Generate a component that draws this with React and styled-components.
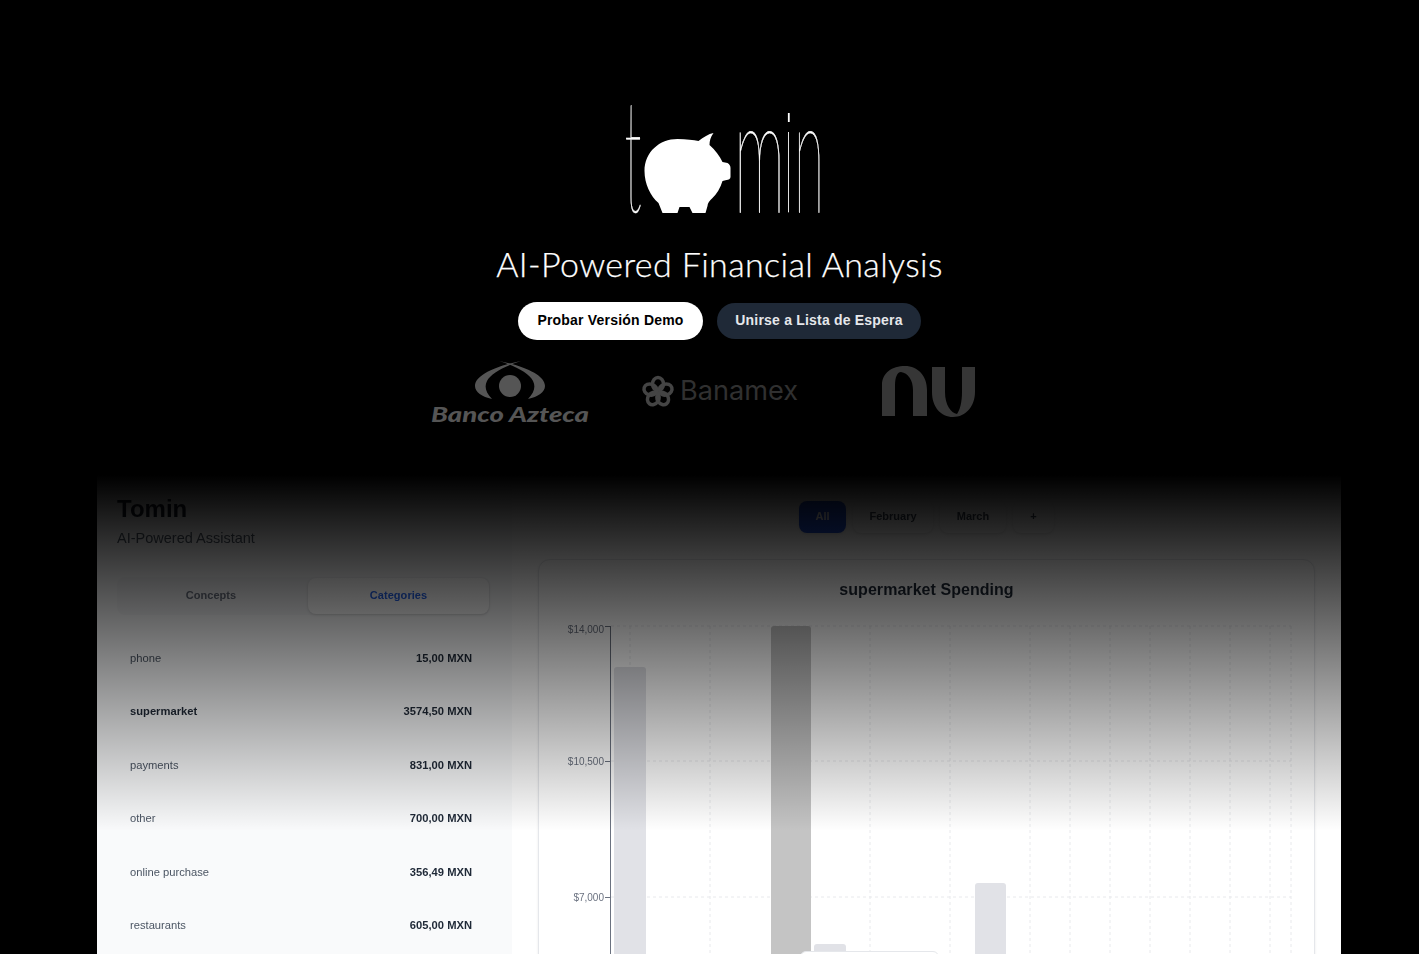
import React from 'react';
import styled, { createGlobalStyle } from 'styled-components';

const Global = createGlobalStyle`
  html, body { margin: 0; padding: 0; background: #000; height: 100%; overflow: hidden; }
  * { box-sizing: border-box; }
`;

const Page = styled.div`
  width: 1439px;
  height: 954px;
  overflow: hidden;
  background: #000;
  display: flex;
  flex-direction: column;
  align-items: center;
  padding-top: 100px;
  font-family: "Liberation Sans", Arial, sans-serif;
  & > * { flex: none; }
`;
const LogoArt = styled.svg`
  display: block;
  width: 210px;
  height: 118px;
`;
const LogoLetter = styled.text`
  font-family: "Lato", sans-serif;
  font-weight: 100;
  fill: #fff;
  stroke: #fff;
  stroke-width: 0.7px;
`;
const Tagline = styled.h1`
  margin: 26px 0 0;
  font-family: "Lato", sans-serif;
  font-weight: 300;
  font-size: 34px;
  line-height: 40px;
  letter-spacing: 0.38px;
  -webkit-text-stroke: 0.25px #fff;
  color: #fff;
`;
const Actions = styled.div`
  display: flex;
  align-items: center;
  gap: 14px;
  margin-top: 18px;
`;
const Action = styled.button`
  border: 0;
  padding: 0 0 2px;
  font-family: inherit;
  font-weight: 700;
  font-size: 14px;
  letter-spacing: 0.2px;
  border-radius: 20px;
  width: ${p => (p.$primary ? 185 : 204)}px;
  height: ${p => (p.$primary ? 38 : 36)}px;
  background: ${p => (p.$primary ? '#fff' : '#1f2937')};
  color: ${p => (p.$primary ? '#000' : '#e5e7eb')};
`;
const Brands = styled.div`
  display: flex;
  align-items: center;
  justify-content: center;
  margin-top: 20px;
  height: 68px;
`;
const BrandArt = styled.svg`
  display: block;
  width: 210px;
  height: 68px;
`;
const Preview = styled.section`
  position: relative;
  width: 1244px;
  height: 600px;
  margin: 47px 0 0 -1px;
  background: #fff;
  display: grid;
  grid-template-columns: 415px 1fr;
  overflow: hidden;
  filter: blur(0.35px);
`;
const Fade = styled.div`
  position: absolute;
  left: 0;
  right: 0;
  top: 0;
  height: 356px;
  background: linear-gradient(to bottom, #000 0%, rgba(0,0,0,0.88) 12%, rgba(0,0,0,0) 100%);
  pointer-events: none;
`;
const Sidebar = styled.aside`
  background: #f9fafb;
  padding: 20px 22px 0 20px;
`;
const Title = styled.h2`
  margin: 0;
  font-size: 24px;
  line-height: 28px;
  font-weight: 700;
  color: #111827;
`;
const Subtitle = styled.p`
  margin: 5px 0 0;
  font-size: 14.5px;
  line-height: 20px;
  color: #4b5563;
`;
const Tabs = styled.div`
  display: grid;
  grid-template-columns: 1fr 181px;
  gap: 4px;
  margin-top: 29px;
  height: 38px;
  padding: 1px;
  border-radius: 8px;
  background: #f3f4f6;
`;
const Tab = styled.div`
  display: flex;
  align-items: center;
  justify-content: center;
  border-radius: 8px;
  padding-bottom: 2px;
  font-size: 11px;
  font-weight: 700;
  letter-spacing: 0.05px;
  color: ${p => (p.$active ? '#2563eb' : '#6b7280')};
  background: ${p => (p.$active ? '#fff' : 'transparent')};
  box-shadow: ${p => (p.$active ? '0 1px 3px rgba(0,0,0,.15)' : 'none')};
`;
const List = styled.div`
  margin-top: 16.4px;
`;
const Row = styled.div`
  display: flex;
  justify-content: space-between;
  align-items: center;
  height: 53.4px;
  padding: 0 18px 0 13px;
  font-size: 11.2px;
`;
const RowLabel = styled.span`
  color: ${p => (p.$active ? '#1f2937' : '#4b5563')};
  font-weight: ${p => (p.$active ? 700 : 400)};
`;
const RowValue = styled.span`
  color: #1f2937;
  font-weight: 700;
`;
const Main = styled.main`
  background: #fff;
  padding: 26px 26px 0;
  display: flex;
  flex-direction: column;
`;
const Pills = styled.div`
  display: flex;
  justify-content: center;
  gap: 7px;
`;
const Pill = styled.div`
  height: 32px;
  width: ${p => p.$width}px;
  padding-bottom: 2px;
  display: flex;
  align-items: center;
  justify-content: center;
  border-radius: 8px;
  font-size: 11px;
  font-weight: 700;
  color: ${p => (p.$active ? '#fff' : '#374151')};
  background: ${p => (p.$active ? '#1d4ed8' : '#fff')};
  box-shadow: 0 1px 3px rgba(0,0,0,.12);
`;
const Card = styled.div`
  position: relative;
  margin-top: 26px;
  width: 777px;
  height: 600px;
  border: 1px solid #e5e7eb;
  border-radius: 12px;
  background: #fff;
  box-shadow: 0 1px 3px rgba(0,0,0,.08);
`;
const CardTitle = styled.h3`
  margin: 20px 0 0;
  text-align: center;
  font-size: 16px;
  line-height: 20px;
  letter-spacing: 0.05px;
  font-weight: 700;
  color: #1f2937;
`;
const Chart = styled.svg`
  display: block;
  margin-top: 16px;
  width: 775px;
  height: 340px;
  font-family: "Liberation Sans", Arial, sans-serif;
`;
const Tooltip = styled.div`
  position: absolute;
  left: 261px;
  top: 391px;
  width: 139px;
  height: 70px;
  background: #fff;
  border: 1px solid #e5e7eb;
  border-radius: 6px;
`;

const rows = [
  ['phone', '15,00 MXN'],
  ['supermarket', '3574,50 MXN', true],
  ['payments', '831,00 MXN'],
  ['other', '700,00 MXN'],
  ['online purchase', '356,49 MXN'],
  ['restaurants', '605,00 MXN'],
];
const gridX = [630, 710, 790, 870, 950, 1030, 1070, 1110, 1150, 1190, 1230, 1270, 1291];
const gridY = [626, 761, 897];
const ticks = [['$14,000', 626, 633], ['$10,500', 761, 765], ['$7,000', 897, 901]];
const bars = [
  [614, 667, 32, '#e1e2e7'],
  [771, 626, 40, '#c4c4c4'],
  [814, 944, 32, '#e1e2e7'],
  [975, 883, 31, '#e1e2e7'],
];
const petals = [0, 72, 144, 216, 288];

const TominLogo = () => (
  <LogoArt viewBox="614.5 100 210 118" aria-label="tomin">
    <defs>
      <clipPath id="below-dot">
        <rect x="780" y="126" width="20" height="90" />
      </clipPath>
    </defs>
    <LogoLetter x="624" y="212" textLength="17" lengthAdjust="spacingAndGlyphs" fontSize="158">t</LogoLetter>
    <LogoLetter x="733.5" y="212" textLength="51" lengthAdjust="spacingAndGlyphs" fontSize="162">m</LogoLetter>
    <LogoLetter x="782" y="212" textLength="12" lengthAdjust="spacingAndGlyphs" fontSize="162" clipPath="url(#below-dot)">i</LogoLetter>
    <LogoLetter x="793.5" y="212" textLength="30" lengthAdjust="spacingAndGlyphs" fontSize="162">n</LogoLetter>
    <rect x="787.4" y="113" width="1.8" height="9" fill="#fff" />
    <path fill="#fff" d="M644 171C644 152 659 139 677 139C686 139 693 140 698 141C703 137 708 134 713 133C710 137 709 141 709 145C715 150 719 156 722 162L727 163C729 164 730 166 730 168V177C730 179 728 180 726 180L722 181C720 188 716 194 712 198C709 201 707 203 707 206L705 213H692L689 207H679L677 213H662L658 203C650 196 644 184 644 171Z" />
  </LogoArt>
);

const Crescent = ({ flip }) => (
  <path
    fill="#555"
    transform={flip ? 'translate(1020 0) scale(-1 1)' : undefined}
    d="M521 361C496 366 475 375 475 386C475 392 482 397 492 399C486 393 484 387 487 381C491 373 505 366 521 361Z"
  />
);

const AztecaLogo = () => (
  <BrandArt viewBox="405 360 210 68" aria-label="Banco Azteca">
    <Crescent />
    <Crescent flip />
    <circle cx="510" cy="386" r="11" fill="#555" />
    <text x="431" y="422" textLength="158" lengthAdjust="spacingAndGlyphs" fontFamily="Lato" fontWeight="900" fontStyle="italic" fontSize="21" fill="#555">Banco Azteca</text>
  </BrandArt>
);

const BanamexLogo = () => (
  <BrandArt viewBox="615 360 210 68" aria-label="Banamex">
    <g fill="none" stroke="#444" strokeWidth="3.5">
      {petals.map(a => (
        <ellipse key={a} cx="658" cy="384" rx="5.5" ry="6.5" transform={`rotate(${a} 658 392)`} />
      ))}
    </g>
    <text x="680" y="400" textLength="118" lengthAdjust="spacingAndGlyphs" fontFamily="Inter" fontSize="27" fill="#303030">Banamex</text>
  </BrandArt>
);

const NuLogo = () => (
  <BrandArt viewBox="825 360 210 68" aria-label="Nu">
    <path fill="#363636" d="M882 416V385C882 373 892 366 905 366C918 366 927 376 927 390V416H913V390C913 380 908 373 901 372C897 372 895 378 895 385V416Z" />
    <path fill="#363636" d="M932 367H945V392C945 405 951 413 957 414C960 410 962 402 962 392V367H975V392C975 406 966 417 953 417C941 417 932 407 932 392Z" />
  </BrandArt>
);

export default function App() {
  return (
    <Page>
      <Global />
      <TominLogo />
      <Tagline>AI-Powered Financial Analysis</Tagline>
      <Actions>
        <Action $primary>Probar Versión Demo</Action>
        <Action>Unirse a Lista de Espera</Action>
      </Actions>
      <Brands>
        <AztecaLogo />
        <BanamexLogo />
        <NuLogo />
      </Brands>
      <Preview>
        <Sidebar>
          <Title>Tomin</Title>
          <Subtitle>AI-Powered Assistant</Subtitle>
          <Tabs>
            <Tab>Concepts</Tab>
            <Tab $active>Categories</Tab>
          </Tabs>
          <List>
            {rows.map(([label, value, active]) => (
              <Row key={label}>
                <RowLabel $active={active}>{label}</RowLabel>
                <RowValue>{value}</RowValue>
              </Row>
            ))}
          </List>
        </Sidebar>
        <Main>
          <Pills>
            <Pill $active $width={47}>All</Pill>
            <Pill $width={80}>February</Pill>
            <Pill $width={66}>March</Pill>
            <Pill $width={41}>+</Pill>
          </Pills>
          <Card>
            <CardTitle>supermarket Spending</CardTitle>
            <Chart viewBox="539 616 775 340">
              {gridX.map(x => (
                <line key={x} x1={x} x2={x} y1="626" y2="956" stroke="#e8e9ec" strokeDasharray="3 3" />
              ))}
              {gridY.map(y => (
                <line key={y} x1="611" x2="1291" y1={y} y2={y} stroke="#e8e9ec" strokeDasharray="3 3" />
              ))}
              {bars.map(([x, y, w, c]) => (
                <path key={x} fill={c} d={`M${x} 956V${y + 3}Q${x} ${y} ${x + 3} ${y}H${x + w - 3}Q${x + w} ${y} ${x + w} ${y + 3}V956Z`} />
              ))}
              <line x1="610.5" x2="610.5" y1="626" y2="956" stroke="#6b7280" />
              {ticks.map(([t, y, ty]) => (
                <g key={t}>
                  <line x1="605" x2="610" y1={y + 0.5} y2={y + 0.5} stroke="#6b7280" />
                  <text x="604" y={ty} textAnchor="end" fontSize="10" fill="#6b7280">{t}</text>
                </g>
              ))}
            </Chart>
            <Tooltip />
          </Card>
        </Main>
        <Fade />
      </Preview>
    </Page>
  );
}
